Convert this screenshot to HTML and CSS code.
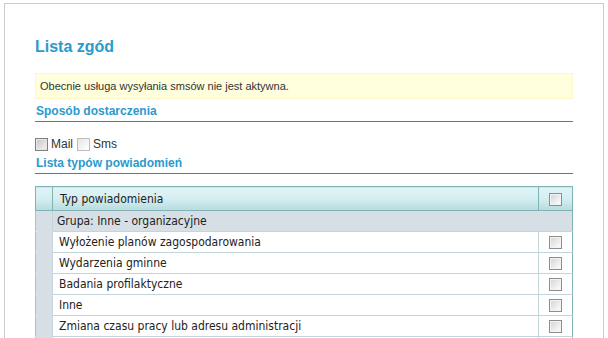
FILE: index.html
```html
<!DOCTYPE html>
<html lang="pl">
<head>
<meta charset="utf-8">
<title>Lista zgód</title>
<link rel="stylesheet" href="styles.css">
</head>
<body>
<div class="page">
  <h1 class="title">Lista zgód</h1>
  <div class="notice">Obecnie usługa wysyłania smsów nie jest aktywna.</div>
  <h2 class="section">Sposób dostarczenia</h2>
  <div class="options">
    <span class="cb cb-dark"></span><span class="opt-label">Mail</span>
    <span class="cb cb-light"></span><span class="opt-label">Sms</span>
  </div>
  <h2 class="section">Lista typów powiadomień</h2>
  <table class="grid">
    <colgroup><col class="col-gap"><col><col class="col-chk"></colgroup>
    <thead>
      <tr><th class="gap"></th><th class="name">Typ powiadomienia</th><th class="chk"><span class="cb"></span></th></tr>
    </thead>
    <tbody>
      <tr class="group"><td class="gap"></td><td class="name" colspan="2">Grupa: Inne - organizacyjne</td></tr>
      <tr><td class="gap"></td><td class="name">Wyłożenie planów zagospodarowania</td><td class="chk"><span class="cb"></span></td></tr>
      <tr><td class="gap"></td><td class="name">Wydarzenia gminne</td><td class="chk"><span class="cb"></span></td></tr>
      <tr><td class="gap"></td><td class="name">Badania profilaktyczne</td><td class="chk"><span class="cb"></span></td></tr>
      <tr><td class="gap"></td><td class="name">Inne</td><td class="chk"><span class="cb"></span></td></tr>
      <tr><td class="gap"></td><td class="name">Zmiana czasu pracy lub adresu administracji</td><td class="chk"><span class="cb"></span></td></tr>
      <tr class="spacer"><td class="gap"></td><td class="name"></td><td class="chk"></td></tr>
    </tbody>
  </table>
</div>
</body>
</html>
```
FILE: styles.css
```css
html, body {
  margin: 0;
  padding: 0;
  overflow: hidden;
  background: #ffffff;
}
body {
  font-family: "Liberation Sans", Arial, sans-serif;
  color: #333333;
}
.page {
  margin: 3px 0 0 4px;
  width: 538px;
  padding: 0 30px 40px 30px;
  border: 1px solid #cccccc;
  min-height: 400px;
}
.title {
  margin: 33px 0 0 0;
  font-size: 16px;
  line-height: 20px;
  font-weight: bold;
  color: #2b9acc;
}
.notice {
  margin-top: 16px;
  padding: 6px 4px 5px 4px;
  font-size: 11px;
  line-height: 13px;
  color: #333333;
  background: #ffffdd;
  border: 1px solid #fff6c8;
}
.section {
  margin: 5px 0 0 0;
  padding: 0 0 2px 1px;
  font-size: 12px;
  line-height: 15px;
  font-weight: bold;
  color: #2b9acc;
  border-bottom: 1px solid #2a8ab5;
}
.options {
  margin-top: 15px;
  height: 14px;
  display: flex;
  align-items: center;
  font-size: 12px;
  line-height: 14px;
  color: #333333;
}
.opt-label {
  margin: 0 4px 0 3px;
}
.cb {
  display: inline-block;
  box-sizing: border-box;
  width: 13px;
  height: 13px;
  border: 1px solid #8d8d8d;
  background: linear-gradient(135deg, #d2d2d2 0%, #ececec 55%, #ffffff 100%);
  box-shadow: inset 0 0 0 1px #f4f4f4;
  vertical-align: middle;
}
.cb-dark {
  border-color: #7f7f7f;
  background: linear-gradient(135deg, #c4c4c4 0%, #e2e2e2 60%, #f6f6f6 100%);
  box-shadow: inset 0 0 0 1px #e8e8e8;
}
.cb-light {
  border-color: #bdbdbd;
  background: linear-gradient(135deg, #e6e6e6 0%, #f6f6f6 60%, #ffffff 100%);
  box-shadow: none;
}
.grid {
  margin-top: 12px;
  width: 538px;
  table-layout: fixed;
  border-collapse: collapse;
  border: 1px solid #80b3b8;
  font-family: "DejaVu Sans Condensed", "DejaVu Sans", Tahoma, sans-serif;
  font-size: 12px;
  line-height: 14px;
  color: #222222;
}
.col-gap { width: 17px; }
.col-chk { width: 34px; }
.grid th {
  height: 23px;
  padding: 0;
  font-weight: normal;
  text-align: left;
  vertical-align: middle;
  background: linear-gradient(to bottom, #e1f4f7 0%, #d6eff2 45%, #b8dcdf 100%);
  border: 1px solid #80b3b8;
}
.grid td {
  height: 20px;
  padding: 0;
  vertical-align: middle;
  background: #ffffff;
  border: 1px solid #c3d5da;
}
.grid .name {
  padding-left: 7px;
}
.grid td.name {
  padding-left: 6px;
}
.grid td.gap {
  background: #d5dfe5;
  border-top-color: #d5dfe5;
  border-bottom-color: #d5dfe5;
  border-left: 1px solid #a9c3c9;
}
.grid .chk {
  text-align: center;
}
.grid td.chk {
  border-right: 1px solid #80b3b8;
}
.grid tr.group td {
  background: #d5dfe5;
}
.grid tr.group td.name {
  padding-left: 4px;
  border-right: 1px solid #80b3b8;
}
```
